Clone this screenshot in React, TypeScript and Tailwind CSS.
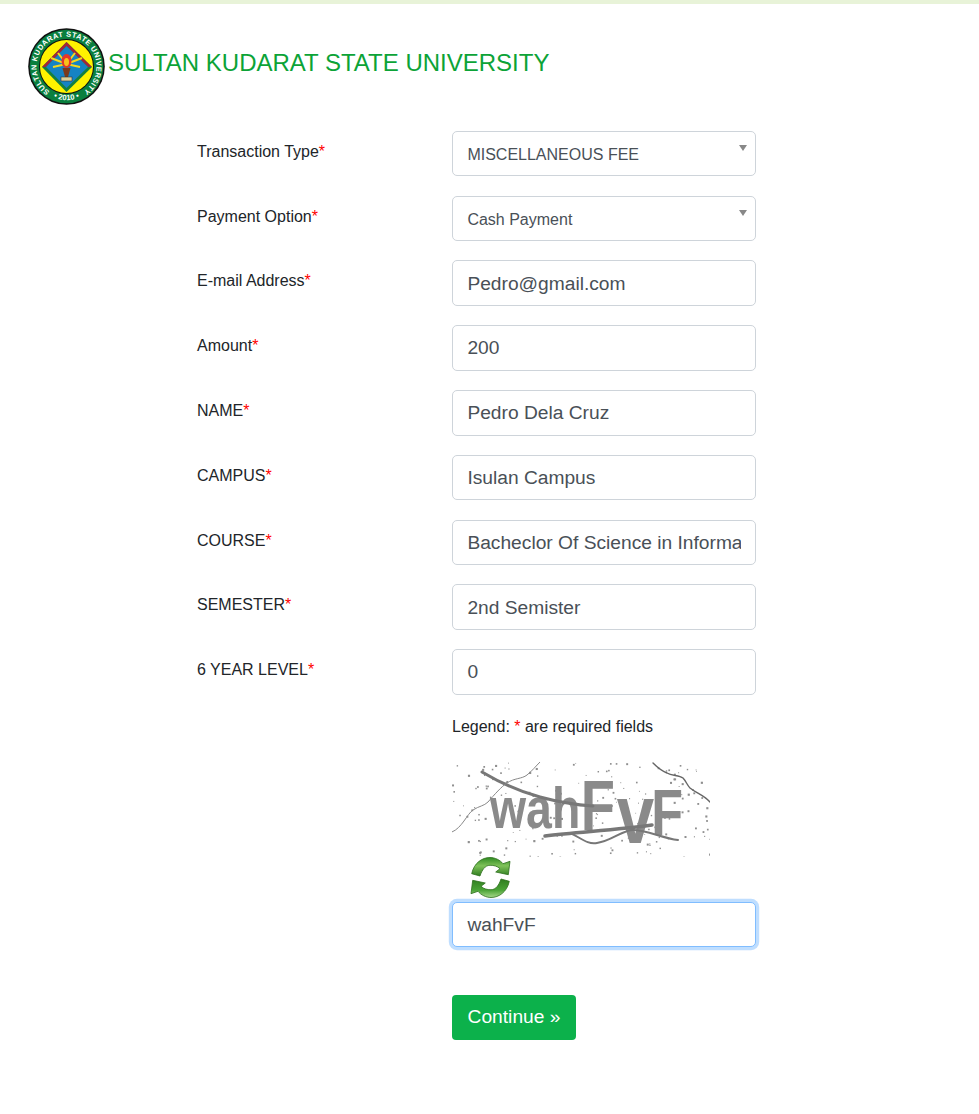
import React from "react";

const font = "font-['Liberation_Sans',Arial,sans-serif]";

function Req({ label }: { label: string }) {
  return (
    <label className="block w-[255px] pt-[11px] text-[16px] leading-[20px] text-[#212529]">
      {label}
      <span className="text-[#ff0000]">*</span>
    </label>
  );
}

function SelectRow({ label, value }: { label: string; value: string }) {
  return (
    <div className="flex h-[45px] mb-[19.8px]">
      <Req label={label} />
      <div className="relative w-[304px] h-[45px]">
        <select
          defaultValue={value}
          className="appearance-none w-full h-full pl-[14.4px] pr-[30px] pt-[3px] rounded-[5px] border border-[#ced4da] bg-white text-[16px] text-[#495057] outline-none"
        >
          <option>{value}</option>
        </select>
        <span className="absolute right-[9.5px] top-[14px] w-0 h-0 border-l-[4.5px] border-r-[4.5px] border-t-[6px] border-l-transparent border-r-transparent border-t-[#888888]" />
      </div>
    </div>
  );
}

function InputRow({ label, value }: { label: string; value: string }) {
  return (
    <div className="flex h-[45.6px] mb-[19.2px]">
      <Req label={label} />
      <input
        readOnly
        value={value}
        className="w-[304px] h-[45.6px] px-[14.4px] pt-[1px] rounded-[5px] border border-[#ced4da] bg-white text-[19.2px] text-[#495057] outline-none"
      />
    </div>
  );
}

function Logo() {
  return (
    <svg width="77" height="77" viewBox="0 0 77 77" className="shrink-0">
      <defs>
        <path id="ringTop" d="M 22.5 64 A 30 30 0 1 1 54.5 64" />
        <path id="ringBottom" d="M 12.5 60 A 34 34 0 0 0 64.5 60" />
      </defs>
      <circle cx="38.5" cy="38.5" r="38.3" fill="#111" />
      <circle cx="38.5" cy="38.5" r="36.8" fill="#0a7f3e" />
      <text fontSize="7.4" fontWeight="700" fill="#fff" fontFamily="Liberation Sans, sans-serif">
        <textPath href="#ringTop" startOffset="1" textLength="152" lengthAdjust="spacing">
          SULTAN KUDARAT STATE UNIVERSITY
        </textPath>
      </text>
      <text fontSize="7.6" fontWeight="700" fill="#fff" fontFamily="Liberation Sans, sans-serif" textAnchor="middle">
        <textPath href="#ringBottom" startOffset="50%">• 2010 •</textPath>
      </text>
      <circle cx="38.5" cy="38.5" r="27.5" fill="#111" />
      <circle cx="38.5" cy="38.5" r="26.5" fill="#fff200" />
      <polygon points="38.5,14 64,39 38.5,64 14,39" fill="#14803f" />
      <polygon points="38.5,14 64,39 60,39 38.5,18 18,39 14,39" fill="#a3263a" />
      <polygon points="38.5,18 60,39 38.5,60 18,39" fill="#1583c4" />
      <g stroke="#f6d91c" strokeWidth="2">
        <line x1="38.5" y1="36" x2="23" y2="30" />
        <line x1="38.5" y1="36" x2="25" y2="39" />
        <line x1="38.5" y1="36" x2="30" y2="25" />
        <line x1="38.5" y1="36" x2="54" y2="30" />
        <line x1="38.5" y1="36" x2="52" y2="39" />
        <line x1="38.5" y1="36" x2="47" y2="25" />
      </g>
      <ellipse cx="38.5" cy="33" rx="5" ry="7" fill="#e4362a" />
      <ellipse cx="38.5" cy="34" rx="2.5" ry="4" fill="#f7c21b" />
      <polygon points="34.5,40 42.5,40 40,49 37,49" fill="#7a3a1c" />
      <rect x="33" y="49" width="11" height="4" fill="#d9cf9a" stroke="#333" strokeWidth="0.6" />
    </svg>
  );
}

// seeded so the speckle stays the same every render
function speckle(count: number) {
  const dots: { x: number; y: number; s: number }[] = [];
  let seed = 17;
  const next = () => {
    seed = (seed * 16807) % 2147483647;
    return seed / 2147483647;
  };
  for (let i = 0; i < count; i++) {
    dots.push({ x: next() * 258, y: next() * 95, s: 0.8 + next() * 1.4 });
  }
  return dots;
}

function Captcha() {
  return (
    <svg width="258" height="95" viewBox="0 0 258 95" className="block">
      <defs>
        <filter id="soft">
          <feGaussianBlur stdDeviation="0.5" />
        </filter>
      </defs>
      <g filter="url(#soft)">
        {speckle(190).map((d, i) => (
          <rect key={i} x={d.x} y={d.y} width={d.s} height={d.s} fill="#8f8f8f" />
        ))}
        <text
          transform="scale(0.8 1)"
          fill="#8a8a8a"
          fontFamily="Liberation Sans, sans-serif"
          fontWeight="700"
        >
          <tspan x="47.5" y="66" fontSize="58">wah</tspan>
          <tspan x="161" y="68" fontSize="70">F</tspan>
          <tspan x="206" y="81" fontSize="84">v</tspan>
          <tspan x="249" y="73" fontSize="65">F</tspan>
        </text>
        <g fill="none" stroke="#777" strokeLinecap="round">
          <path d="M30 10 C50 22 70 30 88 35 C110 41 125 43 141 44" strokeWidth="3" />
          <path d="M93 74 C125 70 165 68 200 63" strokeWidth="3.5" />
          <path d="M118 71 C128 75 135 83 145 81 C160 79 170 68 181 68 C195 68 210 76 226 78" strokeWidth="2" />
          <path d="M0 70 C10 66 15 52 21 48 C27 44 32 44 36 40 C42 33 50 24 55 21 C62 16 70 17 75 13 C80 9 84 4 88 0" strokeWidth="1" stroke="#888" />
          <path d="M201 1 C206 6 210 9 215 11 C220 14 227 13 231 16 C234 19 235 23 238 26 C244 31 252 33 258 40" strokeWidth="1.4" stroke="#666" />
        </g>
      </g>
    </svg>
  );
}

function RefreshIcon() {
  return (
    <svg width="41" height="41" viewBox="0 0 41 41" className="block ml-[18px]">
      <defs>
        <linearGradient id="refreshTop" x1="0" y1="0" x2="0" y2="1">
          <stop offset="0" stopColor="#2f8a22" />
          <stop offset="0.45" stopColor="#7fc25a" />
          <stop offset="1" stopColor="#2f7d1f" />
        </linearGradient>
        <linearGradient id="refreshBottom" x1="0" y1="0" x2="0" y2="1">
          <stop offset="0" stopColor="#2f7d1f" />
          <stop offset="0.6" stopColor="#4aa336" />
          <stop offset="1" stopColor="#a7d98b" />
        </linearGradient>
      </defs>
      <path
        d="M1.7 16.7 C4 6 12 0.5 20 0.5 C25 0.5 30 3 33 6.7 L40 4.3 L38.3 17.7 L25.7 15 L30 11.7 C27 9 24 8.3 20 8.3 C15 8.3 12 13 10 19 Z"
        fill="url(#refreshTop)"
        stroke="#2c6e1c"
        strokeWidth="0.8"
      />
      <path
        d="M39.3 24.3 C37 35 29 40.5 21 40.5 C16 40.5 11 38 8 34.3 L1 36.7 L2.7 23.3 L15.3 26 L11 29.3 C14 32 17 32.7 21 32.7 C26 32.7 29 28 31 22 Z"
        fill="url(#refreshBottom)"
        stroke="#2c6e1c"
        strokeWidth="0.8"
      />
    </svg>
  );
}

export default function App() {
  return (
    <div className={`${font} min-h-[1114px] bg-white`}>
      <div className="h-[4px] bg-[#e8f3d8]" />
      <div className="flex items-center pl-[28px] pt-[24px]">
        <Logo />
        <h1 className="ml-[3px] pb-[7px] text-[24px] leading-[30px] font-normal text-[#0ca337]">
          SULTAN KUDARAT STATE UNIVERSITY
        </h1>
      </div>

      <form className="pl-[197px] pt-[25.8px]">
        <SelectRow label="Transaction Type" value="MISCELLANEOUS FEE" />
        <SelectRow label="Payment Option" value="Cash Payment" />
        <InputRow label="E-mail Address" value="Pedro@gmail.com" />
        <InputRow label="Amount" value="200" />
        <InputRow label="NAME" value="Pedro Dela Cruz" />
        <InputRow label="CAMPUS" value="Isulan Campus" />
        <InputRow label="COURSE" value="Bacheclor Of Science in Information Technology" />
        <InputRow label="SEMESTER" value="2nd Semister" />
        <InputRow label="6 YEAR LEVEL" value="0" />

        <div className="ml-[255px] w-[304px] pt-[1px]">
          <p className="text-[16px] leading-[24px] text-[#212529]">
            Legend: <span className="text-[#ff0000]">*</span> are required fields
          </p>
          <div className="mt-[23px]">
            <Captcha />
          </div>
          <RefreshIcon />
          <input
            readOnly
            value="wahFvF"
            className="block mt-[4px] w-[304px] h-[45px] px-[14.4px] pt-[1px] rounded-[5px] border border-[#80bdff] shadow-[0_0_0_3.2px_rgba(0,123,255,0.25)] bg-white text-[19.2px] text-[#495057] outline-none"
          />
          <button
            type="button"
            className="block mt-[48px] w-[124px] h-[45px] rounded-[4px] bg-[#0cb14b] text-[19.2px] text-white"
          >
            Continue »
          </button>
        </div>
      </form>
    </div>
  );
}
